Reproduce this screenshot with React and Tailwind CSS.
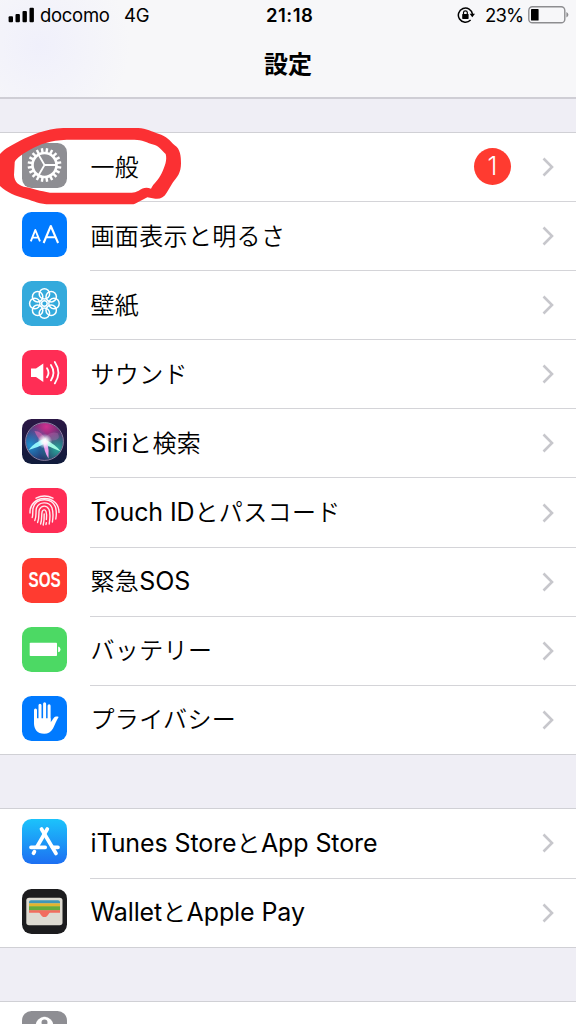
const CHEVRON = "M1.5 1.5 L10 10 L1.5 18.5";

// teeth of the gear, evenly spaced around the ring
const gearTeeth = Array.from({ length: 20 }, (_, i) => i * 18 + 9);
const petals = Array.from({ length: 8 }, (_, i) => i * 45);

const GearIcon = () => (
  <svg viewBox="0 0 45 45" className="block size-full">
    <rect width="45" height="45" rx="9.5" fill="#8e8e93" />
    <g stroke="#fff" fill="none">
      <circle cx="22.5" cy="22" r="12" strokeWidth="2.6" />
      <g strokeWidth="2.4">
        {gearTeeth.map((a) => (
          <path key={a} d="M35 22 H39.4" transform={`rotate(${a} 22.5 22)`} />
        ))}
      </g>
      <path d="M22.5 22 H34 M22.5 22 L16.7 12 M22.5 22 L16.7 32" strokeWidth="1.8" />
    </g>
  </svg>
);

const DisplayIcon = () => (
  <svg viewBox="0 0 45 45" className="block size-full">
    <rect width="45" height="45" rx="9.5" fill="#007aff" />
    <g stroke="#fff" fill="none" strokeLinejoin="round">
      <path d="M8.8 29.3 L13.3 18 L18 29.3 M10.4 25.6 H16.4" strokeWidth="1.9" />
      <path d="M21.6 31 L28.8 14 L36.1 31 M24.2 25.3 H33.6" strokeWidth="2.1" />
    </g>
  </svg>
);

const WallpaperIcon = () => (
  <svg viewBox="0 0 45 45" className="block size-full">
    <rect width="45" height="45" rx="9.5" fill="#34aadc" />
    <g stroke="#fff" fill="none" strokeWidth="1.5">
      <circle cx="22.4" cy="22.5" r="2.8" />
      {petals.map((a) => (
        <circle key={a} cx="32" cy="22.5" r="5.2" transform={`rotate(${a} 22.4 22.5)`} />
      ))}
    </g>
  </svg>
);

const SoundIcon = () => (
  <svg viewBox="0 0 45 45" className="block size-full">
    <rect width="45" height="45" rx="9.5" fill="#ff2d55" />
    <path d="M9 18.5 H14 L21.3 13.6 V32 L14 27 H9 Z" fill="#fff" />
    <g stroke="#fff" fill="none" strokeWidth="1.8" strokeLinecap="round">
      <path d="M25 18.3 Q28 22.7 25 27.2" />
      <path d="M28.9 15 Q34 22.7 28.9 30.4" />
      <path d="M32.8 12 Q40 22.7 32.8 33.4" />
    </g>
  </svg>
);

const SiriIcon = () => (
  <svg viewBox="0 0 45 45" className="block size-full">
    <defs>
      <linearGradient id="siriBg" x1="0" y1="0" x2="0" y2="1">
        <stop offset="0" stopColor="#2b1745" />
        <stop offset="1" stopColor="#101b3b" />
      </linearGradient>
      <radialGradient id="siriPink" cx="0.55" cy="0.1" r="0.65">
        <stop offset="0" stopColor="#d0308f" />
        <stop offset="1" stopColor="#c83393" stopOpacity="0" />
      </radialGradient>
      <radialGradient id="siriBlue" cx="0.12" cy="0.6" r="0.55">
        <stop offset="0" stopColor="#218fd0" />
        <stop offset="1" stopColor="#218fd0" stopOpacity="0" />
      </radialGradient>
      <radialGradient id="siriTeal" cx="0.85" cy="0.7" r="0.5">
        <stop offset="0" stopColor="#2aa79b" />
        <stop offset="1" stopColor="#2aa79b" stopOpacity="0" />
      </radialGradient>
      <radialGradient id="siriGlow">
        <stop offset="0" stopColor="#fff" />
        <stop offset="0.4" stopColor="#fff" stopOpacity="0.8" />
        <stop offset="1" stopColor="#dff" stopOpacity="0" />
      </radialGradient>
    </defs>
    <rect width="45" height="45" rx="9.5" fill="url(#siriBg)" />
    <circle cx="22.5" cy="22.5" r="18.5" fill="#27285f" />
    <circle cx="22.5" cy="22.5" r="18.5" fill="url(#siriPink)" />
    <circle cx="22.5" cy="22.5" r="18.5" fill="url(#siriBlue)" />
    <circle cx="22.5" cy="22.5" r="18.5" fill="url(#siriTeal)" />
    <path d="M24 21 Q20 12 12.5 12 Q15 19 21 24 Z" fill="#ee6cb4" opacity="0.55" />
    <path d="M22 20 Q27 12 35.5 14 Q39 19 34 21 Q28 22 24 22 Z" fill="#b765b0" opacity="0.4" />
    <path d="M24 19.5 Q13 22.5 6.5 31 Q16 28.5 24 24 Z" fill="#8ff2fb" />
    <path d="M23 20.5 Q33 25 38.8 32.5 Q29 28.5 21 24.5 Z" fill="#9ffae2" />
    <path d="M21 22 L25 22 Q27.3 31 26.5 39.5 Q22 33 21 22 Z" fill="#ee9eee" />
    <circle cx="22.8" cy="22.3" r="7.5" fill="url(#siriGlow)" />
    <circle cx="22.5" cy="22.5" r="18.9" fill="none" stroke="#a99bbd" strokeWidth="1" opacity="0.8" />
  </svg>
);

const TouchIdIcon = () => (
  <svg viewBox="0 0 45 45" className="block size-full">
    <rect width="45" height="45" rx="9.5" fill="#ff2d55" />
    <g stroke="#fff" fill="none" strokeWidth="1.4" strokeLinecap="round" opacity="0.92">
      <path d="M14 10.2 Q22.5 5.8 31 10.2" />
      <path d="M8 25 C7 6.5 37 5 37 24.5" />
      <path d="M10.2 29.5 C11.3 27 10.2 23 11.2 19.8 C14 9.2 30 9.2 33.4 18.8 C34.6 23 34.5 27 33.8 31" />
      <path d="M12.8 32.5 C15 28 13.3 23 14.5 20 C17 13.4 27 13.2 29.8 19.5 C31.5 24 31.2 29 30.4 34" />
      <path d="M15.6 34.5 C17.8 29 16.2 24.5 17.4 21.5 C19.5 17 25 17 27 21.5 C28.4 25 28 31 27.2 36" />
      <path d="M18.6 36 C20.4 31 19.2 26 20.2 23.4 C21.2 21.4 23.2 21.4 24 23.4 C24.8 25.8 24.8 28.5 24.4 31.5" />
      <path d="M21.2 37 C22.2 33 22.3 29 22.2 26" />
      <path d="M24 36.5 L24.3 34.8" />
    </g>
  </svg>
);

const SosIcon = () => (
  <div className="flex size-full items-center justify-center rounded-[9.5px] bg-[#ff3b30]">
    <span className="scale-x-[0.71] pt-px font-['Liberation_Sans'] text-[21.4px] leading-none font-bold text-white">SOS</span>
  </div>
);

const BatteryIcon = () => (
  <svg viewBox="0 0 45 45" className="block size-full">
    <rect width="45" height="45" rx="9.5" fill="#4cd964" />
    <rect x="7.7" y="15.7" width="27.3" height="13.3" rx="0.8" fill="#fff" />
    <path d="M36.1 19.6 Q38.5 20 38.5 22.4 Q38.5 24.8 36.1 25.2 Z" fill="#fff" />
  </svg>
);

const PrivacyIcon = () => (
  <svg viewBox="0 0 45 45" className="block size-full">
    <rect width="45" height="45" rx="9.5" fill="#007aff" />
    <g stroke="#fff" strokeWidth="3" strokeLinecap="round">
      <path d="M13.5 14 V27 M18 9.2 V25 M22.6 7.8 V25 M27.1 9.8 V25" />
    </g>
    <path
      d="M12 22.3 H28.6 V26.3 C30.5 24.5 31.5 21 34 20.5 C35.8 20.2 36.8 20.6 36.5 21.3 C34.5 24 33 29 31 32.5 C29 36 26 37.8 22.3 37.8 C15 37.8 12 33 12 27 Z"
      fill="#fff"
    />
  </svg>
);

const AppStoreIcon = () => (
  <svg viewBox="0 0 45 45" className="block size-full">
    <defs>
      <linearGradient id="storeBg" x1="0" y1="0" x2="0" y2="1">
        <stop offset="0" stopColor="#1cc3fb" />
        <stop offset="1" stopColor="#1d6ff2" />
      </linearGradient>
    </defs>
    <rect width="45" height="45" rx="9.5" fill="url(#storeBg)" />
    <g stroke="#fff" strokeWidth="3.7" strokeLinecap="round" fill="none">
      <path d="M25.3 10 L15 27.8" />
      <path d="M19.5 10 L34 34.5" />
      <path d="M9 28.3 H23.2 M30.5 28.3 H36" />
      <path d="M12.4 32.7 L11.5 34.2" />
    </g>
  </svg>
);

const WalletIcon = () => (
  <svg viewBox="0 0 45 45" className="block size-full">
    <rect width="45" height="45" rx="9.5" fill="#1c1c1e" />
    <rect x="4.3" y="8.7" width="36.2" height="27.6" rx="2.8" fill="#dedbd2" />
    <path d="M7 14.4 V13 Q7 11.2 9 11.2 H36 Q38 11.2 38 13 V14.4 Z" fill="#4097b8" />
    <rect x="7" y="14.3" width="31" height="3.5" fill="#e2b42f" />
    <rect x="7" y="17.3" width="31" height="4.3" fill="#65ac3d" />
    <path d="M7 21.2 H38 V23.7 H28 C26.5 24 26 28 22.5 28 C19 28 18.5 24 17 23.7 H7 Z" fill="#f26d5f" />
  </svg>
);

const KeyIcon = () => (
  <svg viewBox="0 0 45 45" className="block size-full">
    <rect width="45" height="45" rx="9.5" fill="#8e8e93" />
    <circle cx="22.5" cy="14.6" r="8.8" fill="#fff" />
    <circle cx="22.5" cy="11.5" r="3" fill="#8e8e93" />
  </svg>
);

const Ja = ({ children }) => (
  <span className="font-['Noto_Sans_CJK_JP',sans-serif] text-[24px] font-[350] tracking-[0.35px]">{children}</span>
);
const En = ({ children }) => <span className="text-[25px] tracking-[-0.1px]">{children}</span>;

const mainItems = [
  { key: "general", icon: <GearIcon />, label: <Ja>一般</Ja>, badge: 1 },
  { key: "display", icon: <DisplayIcon />, label: <Ja>画面表示と明るさ</Ja> },
  { key: "wallpaper", icon: <WallpaperIcon />, label: <Ja>壁紙</Ja> },
  { key: "sound", icon: <SoundIcon />, label: <Ja>サウンド</Ja> },
  { key: "siri", icon: <SiriIcon />, label: <><En>Siri</En><Ja>と検索</Ja></> },
  { key: "touchid", icon: <TouchIdIcon />, label: <><En>Touch ID</En><Ja>とパスコード</Ja></> },
  { key: "sos", icon: <SosIcon />, label: <><Ja>緊急</Ja><En>SOS</En></> },
  { key: "battery", icon: <BatteryIcon />, label: <Ja>バッテリー</Ja> },
  { key: "privacy", icon: <PrivacyIcon />, label: <Ja>プライバシー</Ja> },
];

const storeItems = [
  { key: "store", icon: <AppStoreIcon />, label: <><En>iTunes Store</En><Ja>と</Ja><En>App Store</En></> },
  { key: "wallet", icon: <WalletIcon />, label: <><En>Wallet</En><Ja>と</Ja><En>Apple Pay</En></> },
];

const Row = ({ item, last }) => (
  <div className={`flex pl-[22px] ${last ? "h-[68px]" : "h-[69.1px]"}`}>
    <div className="mt-[10px] size-[45px] shrink-0">{item.icon}</div>
    <div className={`ml-[23px] flex flex-1 items-center pr-[22px] ${last ? "" : "border-b border-[#d4d4d8]"}`}>
      <div className="flex-1 pb-px pl-[0.5px] text-[24px] leading-[36px] whitespace-nowrap">{item.label}</div>
      {item.badge && (
        <div className="mr-[31px] mb-[2px] flex size-[37px] items-center justify-center rounded-full bg-[#ff3b30] pt-px text-[25px] leading-none font-light text-white">
          {item.badge}
        </div>
      )}
      <svg width="12" height="20" viewBox="0 0 12 20" fill="none" stroke="#c7c7cc" strokeWidth="2.6">
        <path d={CHEVRON} />
      </svg>
    </div>
  </div>
);

const Group = ({ items }) => (
  <div className="border-y border-[#d0d0d5] bg-white">
    {items.map((item, i) => (
      <Row key={item.key} item={item} last={i === items.length - 1} />
    ))}
  </div>
);

const StatusBar = () => (
  <div className="flex h-[30px] items-center pl-[8px] text-[18.5px] leading-[20px]">
    <svg width="27" height="16" viewBox="0 0 27 16" fill="#000">
      <rect x="0.6" y="9.3" width="4.4" height="6" rx="1" />
      <rect x="7.5" y="7" width="4.4" height="8.3" rx="1" />
      <rect x="14.5" y="4" width="4.4" height="11.3" rx="1" />
      <rect x="21.5" y="0.7" width="4.4" height="14.6" rx="1" />
    </svg>
    <span className="ml-[5px] w-[84px] tracking-[-0.3px]">docomo</span>
    <span className="w-[142px] tracking-[-0.3px]">4G</span>
    <span className="w-[191px] font-semibold tracking-[0.5px]">21:18</span>
    <svg width="18" height="18" viewBox="0 0 18 18" fill="none" stroke="#000" strokeWidth="1.5">
      <path d="M13.6 14 A7.1 7.1 0 1 1 15.5 8.2" />
      <path d="M12.6 7.8 H18 L15.3 11.2 Z" fill="#000" stroke="none" />
      <rect x="5.2" y="7.9" width="6.4" height="5" rx="0.6" fill="#000" stroke="none" />
      <path d="M6.5 8 V6.6 Q6.5 4.9 8.4 4.9 Q10.3 4.9 10.3 6.6 V8" strokeWidth="1.2" />
    </svg>
    <span className="ml-[10px] w-[43px] tracking-[-0.8px] whitespace-nowrap">23%</span>
    <svg width="41" height="18" viewBox="0 0 41 18">
      <rect x="0.8" y="0.8" width="36" height="16" rx="3.6" fill="none" stroke="#8d8d90" strokeWidth="1.4" />
      <rect x="3" y="3" width="7.6" height="11.6" rx="0.7" fill="#000" />
      <path d="M38.4 6 Q40.4 7 40.4 8.8 Q40.4 10.6 38.4 11.6 Z" fill="#8d8d90" />
    </svg>
  </div>
);

// hand-drawn marker ring around the first row
const MarkerRing = () => (
  <svg className="pointer-events-none absolute top-[120px] left-0" width="200" height="90" viewBox="0 0 600 270">
    <path
      fill="#fb3033"
      fillRule="evenodd"
      d="M0 102 C15 84 38 74 60 62 C95 45 135 27 190 24 H415 C438 25 458 36 475 41 C500 48 510 62 524 76 C541 86 543 110 543 130 C543 158 532 172 518 188 L500 218 C492 232 480 238 466 236 L442 232 L405 251 C400 253 390 253 380 253 H150 C120 253 100 243 80 237 C45 228 20 216 0 198 Z
      M44 130 C42 120 62 104 90 89 C120 72 150 61 200 59 H400 C425 58 440 68 462 74 C480 80 486 92 497 102 C502 120 495 138 485 160 C476 180 461 190 453 206 C438 200 428 204 416 212 Q405 218 395 218 H150 C120 214 100 206 80 202 C55 198 43 185 42 165 Z"
    />
  </svg>
);

export default function App() {
  return (
    <div className="h-[1024px] w-[577px] overflow-hidden bg-white">
      <div className="relative h-full w-[576px] overflow-hidden bg-[#efeef5] font-[Inter,'Noto_Sans_CJK_JP',sans-serif] text-black">
        <header className="h-[99px] border-b-2 border-[#cfced5] bg-[#f7f7f9] bg-radial-[circle_at_40px_45px] from-[#f0f0fb] to-[#f7f7f9] to-[90px]">
          <StatusBar />
          <h1 className="pt-[15px] text-center font-['Noto_Sans_CJK_JP',sans-serif] text-[24px] leading-[36px] font-bold">設定</h1>
        </header>
        <main className="flex flex-col gap-[53.7px] pt-[33px]">
          <Group items={mainItems} />
          <Group items={storeItems} />
          <div className="h-[80px] border-t border-[#d0d0d5] bg-white pt-[9px] pl-[22px]">
            <div className="size-[45px]">
              <KeyIcon />
            </div>
          </div>
        </main>
        <MarkerRing />
      </div>
    </div>
  );
}
